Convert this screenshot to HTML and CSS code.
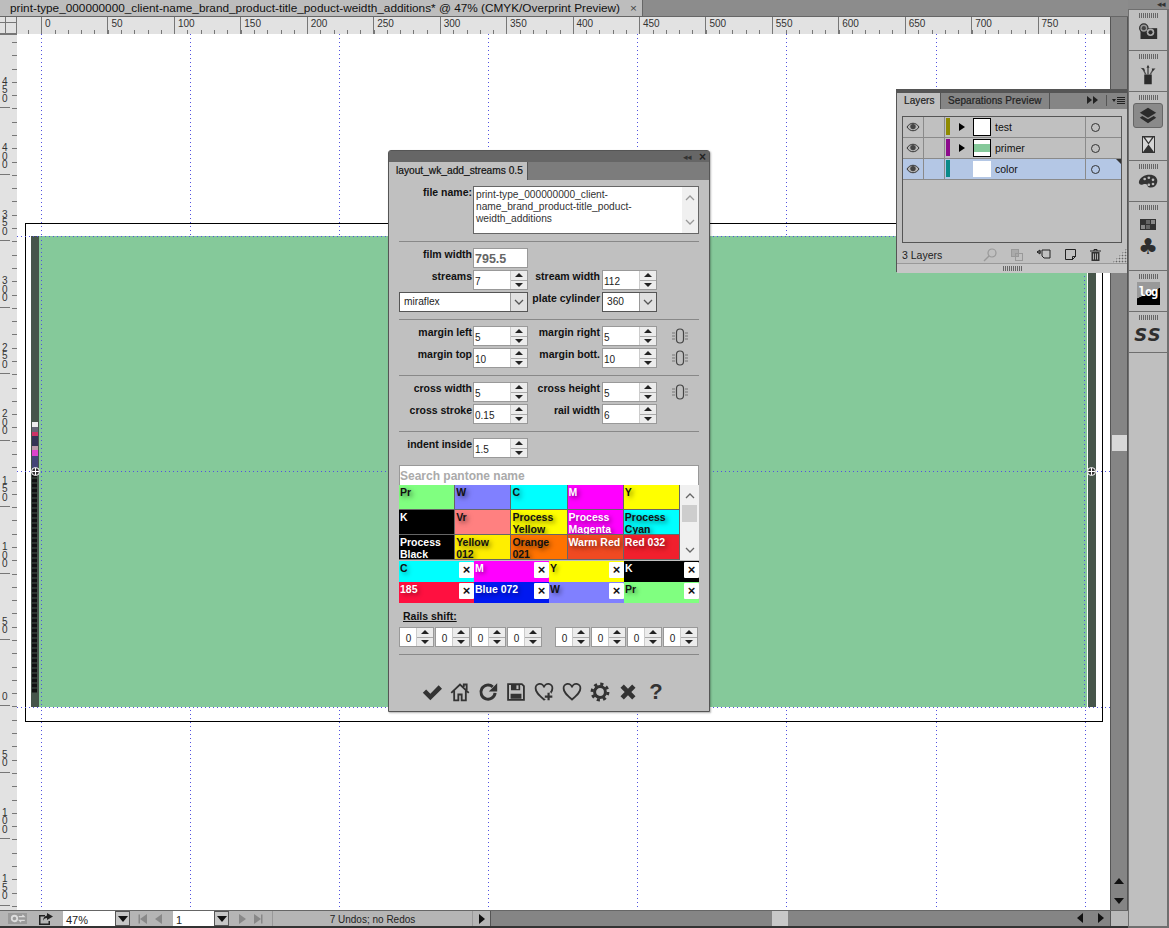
FILE: index.html
```html
<!DOCTYPE html>
<html lang="en">
<head>
    <meta charset="UTF-8">
    <title>print-type_000000000 @ 47%</title>
    <link rel="stylesheet" href="styles.css">
</head>
<body>
<svg class="defs" width="0" height="0">
    <symbol id="chev-down" viewBox="0 0 12 12"><path d="M2 4l4 4 4-4" fill="none" stroke="currentColor" stroke-width="1.3"/></symbol>
    <symbol id="chev-up" viewBox="0 0 12 12"><path d="M2 8l4-4 4 4" fill="none" stroke="currentColor" stroke-width="1.3"/></symbol>
    <symbol id="link" viewBox="0 0 18 18"><rect x="5.5" y="2" width="7" height="14" rx="3.5" fill="none" stroke="#444" stroke-width="1.2"/><path d="M1 6h3M1 9h3M1 12h3M14 6h3M14 9h3M14 12h3" stroke="#777" stroke-width="1.2"/></symbol>
    <symbol id="eye" viewBox="0 0 14 10"><path d="M1 5c3-5 9-5 12 0-3 5-9 5-12 0z" fill="#b5b5b5" stroke="#333"/><circle cx="7" cy="4.6" r="2.7" fill="#444"/></symbol>
    <symbol id="heart" viewBox="0 0 24 24"><path d="M12 21C5 15 2 12 2 8a5 5 0 0 1 10-1.500A5 5 0 0 1 22 8c0 4-3 7-10 13z" fill="none" stroke="#333" stroke-width="2.200"/></symbol>
</svg>

<div class="app">
    <main class="doc">
        <header class="doc-tabs">
            <div class="doc-tab">print-type_000000000_client-name_brand_product-title_poduct-weidth_additions* @ 47% (CMYK/Overprint Preview)<span class="doc-close">×</span></div>
        </header>

        <div class="work">
            <div class="ruler-corner"></div>
            <div class="ruler-h">
                <span>0</span><span>50</span><span>100</span><span>150</span><span>200</span><span>250</span><span>300</span><span>350</span><span>400</span><span>450</span><span>500</span><span>550</span><span>600</span><span>650</span><span>700</span><span>750</span>
            </div>
            <div class="scroll-v">
                <span class="tri tri-up"></span>
                <span class="scroll-v-thumb"></span>
                <span class="tri tri-down"></span>
            </div>
            <div class="ruler-v">
                <span>450</span><span>400</span><span>350</span><span>300</span><span>250</span><span>200</span><span>150</span><span>100</span><span>50</span><span>0</span><span>50</span><span>100</span><span>150</span>
            </div>

            <div class="canvas">
                <div class="guides-v"><i></i><i></i><i></i><i></i><i></i><i></i><i></i><i></i></div>
                <div class="film"></div>
                <div class="print-area"></div>
                <div class="rail rail-left">
                    <div class="rail-marks"></div>
                    <div class="rail-dark"></div>
                </div>
                <div class="rail rail-right"></div>
                <div class="guide-h guide-a"></div>
                <div class="guide-h guide-b"></div>
                <div class="guide-h guide-c"></div>
                <div class="cross cross-left"></div>
                <div class="cross cross-right"></div>
            </div>
        </div>

        <footer class="status">
            <span class="status-gear">
                <svg width="17" height="9" viewBox="0 0 28 14"><circle cx="9" cy="7" r="4.500" fill="none" stroke="#ddd" stroke-width="3"/><path d="M16 4h9l-3-3M26 10h-9l3 3" fill="none" stroke="#ddd" stroke-width="2"/></svg>
            </span>
            <svg class="status-share" width="16" height="14" viewBox="0 0 16 14"><path d="M1 3h6v1.500H2.500v7h8V9H12v4H1z" fill="#222"/><path d="M9 1l6 3.500L9 8V6C7 6 5.500 7 5 9c0-3 1.500-5 4-5.500z" fill="#222"/></svg>
            <span class="field field-zoom">47%</span><span class="field-btn"><b class="tri tri-down"></b></span>
            <span class="nav-group">
                <b class="nav nav-first"></b><b class="nav nav-prev"></b>
            </span>
            <span class="field field-page">1</span><span class="field-btn"><b class="tri tri-down"></b></span>
            <span class="nav-group">
                <b class="nav nav-next"></b><b class="nav nav-last"></b>
            </span>
            <span class="status-msg">7 Undos; no Redos</span>
            <span class="status-play"><b class="tri tri-right"></b></span>
            <div class="scroll-h">
                <span class="scroll-h-thumb"></span>
                <b class="tri tri-left"></b>
                <b class="tri tri-right"></b>
            </div>
            <span class="scroll-corner"></span>
        </footer>
    </main>

    <aside class="dock">
        <div class="dock-top"><span class="collapse">◂◂</span></div>
        <section class="dock-group">
            <div class="grip"></div>
            <svg class="dock-icon" width="20" height="17" viewBox="0 0 24 20"><rect x="3" y="6" width="20" height="13" fill="#2e2e2e"/><circle cx="7" cy="6" r="5" fill="#999" stroke="#2e2e2e" stroke-width="1.500"/><circle cx="7" cy="6" r="2.500" fill="#444"/><circle cx="15" cy="11" r="4.500" fill="#aaa"/><circle cx="15" cy="11" r="2.500" fill="#2e2e2e"/></svg>
        </section>
        <section class="dock-group">
            <div class="grip"></div>
            <svg class="dock-icon" width="18" height="21" viewBox="0 0 24 26"><rect x="7" y="13" width="10" height="13" fill="#2b2b2b"/><path d="M9 13L5 5M12 13V2M15 13l4-7" stroke="#555" stroke-width="2"/><path d="M2 4l5 1 1 4zM12 0l2 4h-4zM22 5l-5 0 1 4z" fill="#333"/></svg>
        </section>
        <section class="dock-group dock-tall">
            <div class="grip"></div>
            <div class="dock-active">
                <svg width="20" height="18" viewBox="0 0 24 22"><path d="M12 1l10 6-10 6L2 7z" fill="#2b2b2b"/><path d="M5 11l7 4 7-4 3 2-10 7L2 13z" fill="#2b2b2b"/></svg>
            </div>
            <svg class="dock-glass" width="13" height="17" viewBox="0 0 13 17"><rect x=".5" y=".5" width="12" height="16" fill="#d5d5d5" stroke="#333"/><path d="M1 16h11L6.500 8.500zM1 1h11L6.500 8.500z" fill="#333"/><path d="M3 1.500h7L6.500 6.500z" fill="#ddd"/></svg>
        </section>
        <section class="dock-group">
            <div class="grip"></div>
            <svg class="dock-icon" width="20" height="15" viewBox="0 0 24 18"><path d="M1 10C2 3 10 0 16 1c5 1 8 5 7 9-1 5-5 7-10 6-2-.5-1-4-4-4-3 0-7 3-8-2z" fill="#333"/><circle cx="8" cy="6" r="1.600" fill="#bbb"/><circle cx="13" cy="4.500" r="1.600" fill="#bbb"/><circle cx="18" cy="7" r="1.600" fill="#bbb"/><circle cx="18" cy="12" r="1.600" fill="#bbb"/><circle cx="13" cy="13" r="1.600" fill="#bbb"/></svg>
        </section>
        <section class="dock-group dock-tall">
            <div class="grip"></div>
            <div class="dock-swatches"><i></i><i class="mid"></i><i class="pale"></i><i class="pale"></i><i class="mid"></i><i></i></div>
            <span class="dock-club">♣</span>
        </section>
        <section class="dock-group">
            <div class="grip"></div>
            <div class="dock-log">log</div>
        </section>
        <section class="dock-group">
            <div class="grip"></div>
            <div class="dock-ss">SS</div>
        </section>
        <div class="dock-rest"></div>
    </aside>
</div>

<!-- floating script panel -->
<div class="panel streams-panel">
    <div class="panel-head"><span class="collapse">◂◂</span><span class="panel-x">×</span></div>
    <div class="panel-tabs"><div class="panel-tab">layout_wk_add_streams 0.5</div></div>
    <div class="streams-body">
        <div class="file-row">
            <label class="lbl lbl-file">file name:</label>
            <div class="file-box">
                <div class="file-text">print-type_000000000_client-name_brand_product-title_poduct-weidth_additions</div>
                <div class="file-scroll">
                    <svg width="12" height="12"><use href="#chev-up"/></svg>
                    <svg width="12" height="12"><use href="#chev-down"/></svg>
                </div>
            </div>
        </div>
        <hr>
        <div class="form-grid form-film">
            <label class="lbl">film width</label><div class="film-input">795.5</div><span></span><span></span>
            <label class="lbl">streams</label><div class="spin"><span class="val">7</span><span class="btns"><b class="up"></b><b class="dn"></b></span></div>
            <label class="lbl">stream width</label><div class="spin"><span class="val">112</span><span class="btns"><b class="up"></b><b class="dn"></b></span></div>
            <div class="select select-wide"><span>miraflex</span><em><svg width="12" height="12"><use href="#chev-down"/></svg></em></div>
            <label class="lbl">plate cylinder</label><div class="select"><span>360</span><em><svg width="12" height="12"><use href="#chev-down"/></svg></em></div>
        </div>
        <hr>
        <div class="form-grid">
            <label class="lbl">margin left</label><div class="spin"><span class="val">5</span><span class="btns"><b class="up"></b><b class="dn"></b></span></div>
            <label class="lbl">margin right</label><div class="spin"><span class="val">5</span><span class="btns"><b class="up"></b><b class="dn"></b></span></div>
            <svg class="link-icon" width="18" height="18"><use href="#link"/></svg>
            <label class="lbl">margin top</label><div class="spin"><span class="val">10</span><span class="btns"><b class="up"></b><b class="dn"></b></span></div>
            <label class="lbl">margin bott.</label><div class="spin"><span class="val">10</span><span class="btns"><b class="up"></b><b class="dn"></b></span></div>
            <svg class="link-icon" width="18" height="18"><use href="#link"/></svg>
        </div>
        <hr>
        <div class="form-grid">
            <label class="lbl">cross width</label><div class="spin"><span class="val">5</span><span class="btns"><b class="up"></b><b class="dn"></b></span></div>
            <label class="lbl">cross height</label><div class="spin"><span class="val">5</span><span class="btns"><b class="up"></b><b class="dn"></b></span></div>
            <svg class="link-icon" width="18" height="18"><use href="#link"/></svg>
            <label class="lbl">cross stroke</label><div class="spin"><span class="val">0.15</span><span class="btns"><b class="up"></b><b class="dn"></b></span></div>
            <label class="lbl">rail width</label><div class="spin"><span class="val">6</span><span class="btns"><b class="up"></b><b class="dn"></b></span></div>
        </div>
        <hr>
        <div class="form-grid">
            <label class="lbl">indent inside</label><div class="spin"><span class="val">1.5</span><span class="btns"><b class="up"></b><b class="dn"></b></span></div>
        </div>

        <div class="search">Search pantone name</div>
        <div class="pantone">
            <div class="swatches">
                <div class="sw pr">Pr</div><div class="sw w">W</div><div class="sw c">C</div><div class="sw m lt">M</div><div class="sw y">Y</div>
                <div class="sw k lt">K</div><div class="sw vr">Vr</div><div class="sw y">Process Yellow</div><div class="sw m lt">Process Magenta</div><div class="sw c">Process Cyan</div>
                <div class="sw k lt">Process Black</div><div class="sw y012">Yellow<br>012</div><div class="sw o021">Orange 021</div><div class="sw warm lt">Warm Red</div><div class="sw r032 lt">Red 032</div>
            </div>
            <div class="list-scroll">
                <svg width="12" height="12"><use href="#chev-up"/></svg>
                <span class="list-thumb"></span>
                <svg class="list-down" width="12" height="12"><use href="#chev-down"/></svg>
            </div>
        </div>
        <div class="picked">
            <div class="pick c">C<span class="rm">×</span></div><div class="pick m lt">M<span class="rm">×</span></div><div class="pick y">Y<span class="rm">×</span></div><div class="pick k lt">K<span class="rm">×</span></div>
            <div class="pick r185 lt">185<span class="rm">×</span></div><div class="pick b072 lt">Blue 072<span class="rm">×</span></div><div class="pick w">W<span class="rm">×</span></div><div class="pick pr">Pr<span class="rm">×</span></div>
        </div>

        <div class="rails-title">Rails shift:</div>
        <div class="rails">
            <div class="rail-set">
                <div class="spin spin-sm"><span class="val">0</span><span class="btns"><b class="up"></b><b class="dn"></b></span></div>
                <div class="spin spin-sm"><span class="val">0</span><span class="btns"><b class="up"></b><b class="dn"></b></span></div>
                <div class="spin spin-sm"><span class="val">0</span><span class="btns"><b class="up"></b><b class="dn"></b></span></div>
                <div class="spin spin-sm"><span class="val">0</span><span class="btns"><b class="up"></b><b class="dn"></b></span></div>
            </div>
            <div class="rail-set">
                <div class="spin spin-sm"><span class="val">0</span><span class="btns"><b class="up"></b><b class="dn"></b></span></div>
                <div class="spin spin-sm"><span class="val">0</span><span class="btns"><b class="up"></b><b class="dn"></b></span></div>
                <div class="spin spin-sm"><span class="val">0</span><span class="btns"><b class="up"></b><b class="dn"></b></span></div>
                <div class="spin spin-sm"><span class="val">0</span><span class="btns"><b class="up"></b><b class="dn"></b></span></div>
            </div>
        </div>
        <hr class="hr-rails">

        <div class="tools">
            <svg width="20" height="20" viewBox="0 0 24 24"><path d="M1 13l4-4 5 5L20 4l4 4-14 14z" fill="#333"/></svg>
            <svg width="20" height="20" viewBox="0 0 24 24"><path d="M1.500 13L12 3l10.500 10M5 10.500V22h5v-7h4v7h5V10.500M16.500 6V3H20v6.500" fill="none" stroke="#333" stroke-width="2.200"/></svg>
            <svg width="20" height="20" viewBox="0 0 24 24"><path d="M20.500 13a8.500 8.500 0 1 1-2.800-7.200" fill="none" stroke="#333" stroke-width="3.600"/><path d="M23 1.500v10h-10z" fill="#333"/></svg>
            <svg width="20" height="20" viewBox="0 0 24 24"><path d="M2.500 2.500H19L21.500 5v16.500h-19z" fill="none" stroke="#333" stroke-width="2.200"/><path d="M6 2.500h11V10H6zM5.500 20v-6h13v6z" fill="#333"/><path d="M12.500 4h2.500v4.500h-2.500z" fill="#c0c0c0"/></svg>
            <svg width="20" height="20" viewBox="0 0 24 24"><use href="#heart" width="24" height="24"/><path d="M17.500 12.500v10M12.500 17.500h10" stroke="#c0c0c0" stroke-width="6"/><path d="M17.500 13v9M13 17.500h9" stroke="#333" stroke-width="2.600"/></svg>
            <svg width="20" height="20" viewBox="0 0 24 24"><use href="#heart" width="24" height="24"/></svg>
            <svg width="20" height="20" viewBox="0 0 24 24"><circle cx="12" cy="12" r="6.500" fill="none" stroke="#333" stroke-width="3.600"/><circle cx="12" cy="12" r="9.500" fill="none" stroke="#333" stroke-width="3.600" stroke-dasharray="3.730 3.730"/></svg>
            <svg width="20" height="20" viewBox="0 0 24 24"><path d="M3 7l4-4 5 5 5-5 4 4-5 5 5 5-4 4-5-5-5 5-4-4 5-5z" fill="#333"/></svg>
            <span class="tool-help">?</span>
        </div>
    </div>
</div>

<!-- layers panel -->
<div class="panel layers-panel">
    <div class="layers-tabs">
        <div class="layers-tab on">Layers</div>
        <div class="layers-tab">Separations Preview</div>
        <span class="layers-ff"><b></b><b></b></span>
        <span class="layers-menu"><b class="mini-tri"></b><i></i></span>
    </div>
    <div class="layers-body">
        <div class="layers-list">
            <div class="layer">
                <span class="cell-eye"><svg width="14" height="10"><use href="#eye"/></svg></span>
                <span class="cell-lock"></span>
                <span class="cell-color"><i class="olive"></i></span>
                <span class="cell-exp"><b class="exp"></b></span>
                <span class="thumb"></span>
                <span class="layer-name">test</span>
                <span class="cell-target"><i></i></span>
            </div>
            <div class="layer">
                <span class="cell-eye"><svg width="14" height="10"><use href="#eye"/></svg></span>
                <span class="cell-lock"></span>
                <span class="cell-color"><i class="purple"></i></span>
                <span class="cell-exp"><b class="exp"></b></span>
                <span class="thumb thumb-green"></span>
                <span class="layer-name">primer</span>
                <span class="cell-target"><i></i></span>
            </div>
            <div class="layer layer-sel">
                <span class="cell-eye"><svg width="14" height="10"><use href="#eye"/></svg></span>
                <span class="cell-lock"></span>
                <span class="cell-color"><i class="teal"></i></span>
                <span class="cell-exp"></span>
                <span class="thumb thumb-plain"></span>
                <span class="layer-name">color</span>
                <span class="cell-target"><i></i></span>
            </div>
        </div>
        <div class="layers-foot">
            <span class="layers-count">3 Layers</span>
            <svg class="foot-ico" width="14" height="14" viewBox="0 0 14 14"><circle cx="9" cy="5" r="4" fill="none" stroke="#999" stroke-width="1.200"/><path d="M6 8l-5 5" stroke="#999" stroke-width="1.500"/></svg>
            <svg class="foot-ico" width="12" height="12" viewBox="0 0 12 12"><rect x="0.500" y="0.500" width="7" height="7" fill="#aaa" stroke="#999"/><rect x="4.500" y="4.500" width="7" height="7" fill="none" stroke="#999"/></svg>
            <svg class="foot-ico" width="14" height="12" viewBox="0 0 14 12"><path d="M5 1h8v8H7L5 7zM0 3l3-2v4zM0 3h4" fill="none" stroke="#222"/></svg>
            <svg class="foot-ico" width="11" height="12" viewBox="0 0 11 12"><path d="M.5.500h10v7l-3 3h-7zM7.500 11V7.500H11" fill="none" stroke="#222"/></svg>
            <svg class="foot-ico" width="11" height="12" viewBox="0 0 11 12"><path d="M0 2h11M4 2V.500h3V2" fill="none" stroke="#222"/><path d="M1.500 3h8v9h-8z" fill="#333"/><path d="M3.500 4.500v6M5.500 4.500v6M7.500 4.500v6" stroke="#ccc" stroke-width=".8"/></svg>
            <span class="layers-resize"></span>
        </div>
    </div>
    <div class="layers-grip"><div class="grip"></div></div>
</div>
</body>
</html>
```

FILE: styles.css
```css
html, body {
    margin: 0;
    height: 100%;
    overflow: hidden;
}
body {
    position: relative;
    width: 1169px;
    height: 928px;
    font-family: "Liberation Sans", Arial, sans-serif;
    color: #111;
    background-color: #333;
}
.defs {
    position: absolute;
}
.app {
    display: flex;
    height: 928px;
}

/* document area */
.doc {
    flex: 0 0 1128px;
    display: flex;
    flex-direction: column;
}
.doc-tabs {
    height: 17px;
    background-color: #8c8c8c;
    box-sizing: border-box;
    border-bottom: 1px solid #666;
}
.doc-tab {
    position: relative;
    width: 643px;
    height: 16px;
    box-sizing: border-box;
    padding-left: 10px;
    background-color: #bdbdbd;
    border-right: 1px solid #666;
    font-size: 11.8px;
    line-height: 16px;
    white-space: nowrap;
}
.doc-close {
    position: absolute;
    right: 5px;
    top: 0;
    color: #444;
}
.work {
    flex: 1;
    display: grid;
    grid-template-columns: 17px 1093px 18px;
    grid-template-rows: 17px 876px;
}
.ruler-corner {
    box-sizing: border-box;
    border-right: 1px solid #777;
    border-bottom: 1px solid #777;
    background: linear-gradient(#777, #777) 5px 0 / 1px 100% no-repeat, linear-gradient(#777, #777) 0 5px / 100% 1px no-repeat, #e2e2e2;
}
.ruler-h {
    display: flex;
    padding-left: 24px;
    overflow: hidden;
    background-color: #e2e2e2;
    background-image: repeating-linear-gradient(90deg, #777 0 1px, transparent 1px 13.29px);
    background-size: 100% 4px;
    background-position: 10.7px bottom;
    background-repeat: no-repeat;
}
.ruler-h span {
    flex: 0 0 66.45px;
    box-sizing: border-box;
    border-left: 1px solid #777;
    padding-left: 3px;
    font-size: 10px;
    line-height: 14px;
    color: #333;
}
.ruler-h span:last-child {
    flex-basis: 100px;
}
.ruler-v {
    display: flex;
    flex-direction: column;
    padding-top: 7px;
    overflow: hidden;
    background-color: #e2e2e2;
    background-image: repeating-linear-gradient(180deg, #777 0 1px, transparent 1px 13.29px);
    background-size: 5px 100%;
    background-position: right 7px;
    background-repeat: no-repeat;
    box-sizing: border-box;
    border-top: 1px solid #777;
}
.ruler-v span {
    flex: 0 0 66.45px;
    box-sizing: border-box;
    display: flex;
    align-items: flex-end;
    width: 10px;
    border-bottom: 1px solid #777;
    padding: 0 0 4px 2px;
    font-size: 10px;
    line-height: 8.5px;
    color: #333;
    word-break: break-all;
}

/* artboard, the pieces sit on a free canvas */
.canvas {
    position: relative;
    overflow: hidden;
    background-color: #fff;
}
.guides-v {
    position: absolute;
    inset: 0 0 0 24px;
    display: flex;
}
.guides-v i {
    flex: 0 0 149.1px;
    background: repeating-linear-gradient(180deg, #5252e0 0 1px, transparent 1px 4px) left top / 1px 100% no-repeat;
}
.film {
    position: absolute;
    left: 8px;
    top: 189px;
    width: 1076px;
    height: 497px;
    border: 1px solid #000;
}
.print-area {
    position: absolute;
    left: 22px;
    top: 202px;
    width: 1048px;
    height: 471px;
    background-color: #85c99a;
}
.print-area::before,
.print-area::after {
    content: "";
    position: absolute;
    top: 0;
    bottom: 0;
    width: 1px;
    background: repeating-linear-gradient(180deg, #5252e0 0 1px, transparent 1px 4px);
}
.print-area::before {
    left: 2px;
}
.print-area::after {
    right: 2px;
}
.rail {
    position: absolute;
    top: 202px;
    width: 8px;
    height: 471px;
    background-color: #46554a;
}
.rail-left {
    left: 14px;
}
.rail-right {
    left: 1071px;
}
.rail-marks {
    position: absolute;
    left: 1px;
    top: 186px;
    width: 6px;
    height: 48px;
    background: linear-gradient(180deg, #eee 0 5px, #667 5px 10px, #c36 10px 14px, #335 14px 24px, #b9a 24px 28px, #d4c 28px 34px, #447 34px 48px);
}
.rail-dark {
    position: absolute;
    left: 1px;
    top: 238px;
    width: 5px;
    bottom: 14px;
    background: repeating-linear-gradient(180deg, #111 0 3px, #2c342e 3px 5px);
}
.guide-h {
    position: absolute;
    left: 0;
    right: 0;
    height: 1px;
    background: repeating-linear-gradient(90deg, #5252e0 0 1px, transparent 1px 4px);
}
.guide-a {
    top: 202px;
}
.guide-b {
    top: 437px;
}
.guide-c {
    top: 673px;
}
.cross {
    position: absolute;
    top: 433px;
    width: 7px;
    height: 7px;
    border-radius: 50%;
    border: 1px solid #fff;
    background: linear-gradient(#fff, #fff) center / 100% 1px no-repeat, linear-gradient(#fff, #fff) center / 1px 100% no-repeat, #333;
}
.cross-left {
    left: 14px;
}
.cross-right {
    left: 1070px;
}

/* scrollbars and triangles */
.scroll-v {
    position: relative;
    grid-column: 3;
    grid-row: 1 / 3;
    background-color: #858585;
    border-left: 1px solid #555;
    border-right: 1px solid #555;
    box-sizing: border-box;
}
.scroll-v-thumb {
    position: absolute;
    left: 1px;
    right: 0;
    top: 418px;
    height: 16px;
    background-color: #d8d8d8;
}
.scroll-v .tri-up {
    position: absolute;
    left: 3px;
    bottom: 26px;
}
.scroll-v .tri-down {
    position: absolute;
    left: 3px;
    bottom: 6px;
}
.tri {
    display: block;
    width: 0;
    height: 0;
    border-style: solid;
    border-color: transparent;
}
.tri-up {
    border-width: 0 5px 6px;
    border-bottom-color: #111;
}
.tri-down {
    border-width: 6px 5px 0;
    border-top-color: #111;
}
.tri-left {
    border-width: 5px 6px 5px 0;
    border-right-color: #111;
}
.tri-right {
    border-width: 5px 0 5px 6px;
    border-left-color: #111;
}

/* status bar */
.status {
    height: 18px;
    display: flex;
    align-items: stretch;
    box-sizing: border-box;
    background-color: #b5b5b5;
    border-top: 1px solid #666;
    border-bottom: 2px solid #333;
}
.status-gear {
    flex: 0 0 19px;
    height: 11px;
    margin-left: 8px;
    align-self: center;
    display: flex;
    align-items: center;
    justify-content: center;
    background-color: #9a9a9a;
}
.status-share {
    margin: 0 9px 0 11px;
    align-self: center;
}
.field {
    background-color: #fff;
    font-size: 11px;
    line-height: 18px;
    padding-left: 3px;
    box-sizing: border-box;
    color: #222;
    overflow: hidden;
}
.field-zoom {
    flex: 0 0 52px;
}
.field-page {
    flex: 0 0 41px;
}
.field-btn {
    flex: 0 0 15px;
    display: flex;
    align-items: center;
    justify-content: center;
    background-color: #c6c6c6;
    border: 1px solid #555;
    box-sizing: border-box;
}
.nav-group {
    display: flex;
    align-items: center;
    gap: 8px;
    flex: 0 0 43px;
    padding-left: 10px;
    box-sizing: border-box;
}
.nav {
    width: 0;
    height: 0;
    border-style: solid;
    border-color: transparent;
}
.nav-first, .nav-prev {
    border-width: 5px 7px 5px 0;
    border-right-color: #888;
}
.nav-next, .nav-last {
    border-width: 5px 0 5px 7px;
    border-left-color: #888;
}
.nav-first {
    box-shadow: -2px 0 0 -0.5px #888;
}
.nav-last {
    box-shadow: 2px 0 0 -0.5px #888;
}
.status-msg {
    flex: 0 0 200px;
    text-align: center;
    font-size: 10px;
    line-height: 18px;
    color: #222;
    border-left: 1px solid #999;
    box-sizing: border-box;
    overflow: hidden;
}
.status-play {
    flex: 0 0 18px;
    display: flex;
    align-items: center;
    justify-content: center;
    border-left: 1px solid #999;
    box-sizing: border-box;
}
.scroll-h {
    position: relative;
    flex: 1;
    background-color: #858585;
    border-left: 1px solid #555;
}
.scroll-h-thumb {
    position: absolute;
    left: 281px;
    top: 0;
    bottom: 0;
    width: 16px;
    background-color: #c8c8c8;
}
.scroll-h .tri-left {
    position: absolute;
    right: 27px;
    top: 2px;
}
.scroll-h .tri-right {
    position: absolute;
    right: 6px;
    top: 2px;
}
.scroll-corner {
    flex: 0 0 18px;
    background-color: #b9b9b9;
    border-left: 1px solid #555;
    box-sizing: border-box;
}

/* right dock */
.dock {
    flex: 0 0 41px;
    display: flex;
    flex-direction: column;
    box-sizing: border-box;
    padding: 0 2px 2px 1px;
    background-color: #6f6f6f;
}
.dock-top {
    height: 9px;
    margin: 0 -2px 0 -1px;
    background-color: #8a8a8a;
    text-align: right;
}
.collapse {
    font-size: 9px;
    line-height: 8px;
    letter-spacing: -1px;
    color: #333;
}
.dock-top .collapse {
    display: block;
    padding-right: 4px;
}
.dock-group {
    display: flex;
    flex-direction: column;
    align-items: center;
    height: 40px;
    margin-top: 1px;
    background-color: #bfbfbf;
    box-sizing: border-box;
    padding-top: 3px;
}
.dock-tall {
    height: 68px;
}
.grip {
    width: 19px;
    height: 5px;
    flex: none;
    background: repeating-linear-gradient(90deg, #666 0 1px, transparent 1px 2px);
}
.dock-icon {
    margin-top: 5px;
}
.dock-active {
    width: 28px;
    height: 23px;
    margin-top: 3px;
    display: flex;
    flex: none;
    align-items: center;
    justify-content: center;
    background-color: #8a8a8a;
    border: 1px solid #666;
    border-radius: 3px;
}
.dock-glass {
    margin-top: 8px;
}
.dock-swatches {
    display: grid;
    grid-template-columns: repeat(3, 4px);
    grid-auto-rows: 4px;
    gap: 1px;
    padding: 1px;
    margin-top: 9px;
    background-color: #333;
}
.dock-swatches i {
    background-color: #333;
}
.dock-swatches .mid {
    background-color: #666;
}
.dock-swatches .pale {
    background-color: #888;
}
.dock-club {
    margin-top: 5px;
    font-family: "DejaVu Sans", sans-serif;
    font-size: 22px;
    line-height: 24px;
    color: #2e2e2e;
}
.dock-log {
    width: 23px;
    height: 23px;
    margin-top: 3px;
    box-sizing: border-box;
    background: linear-gradient(155deg, #999 0 48%, #000 50%);
    font-family: "DejaVu Sans Mono", monospace;
    font-weight: bold;
    font-size: 12px;
    line-height: 20px;
    color: #fff;
    text-align: center;
    letter-spacing: -1px;
}
.dock-ss {
    margin-top: 4px;
    font-family: "DejaVu Sans", sans-serif;
    font-size: 18px;
    font-weight: bold;
    font-style: italic;
    line-height: 22px;
    letter-spacing: 1px;
    color: #2e2e2e;
}
.dock-rest {
    flex: 1;
    margin-top: 1px;
    background-color: #bfbfbf;
}

/* floating panels */
.panel {
    position: absolute;
    box-sizing: border-box;
    background-color: #c0c0c0;
}
.streams-panel {
    left: 388px;
    top: 150px;
    width: 322px;
    height: 562px;
    border: 1px solid #555;
    border-top-left-radius: 3px;
    border-top-right-radius: 3px;
    box-shadow: 1px 1px 2px rgba(0, 0, 0, 0.3);
}
.panel-head {
    height: 11px;
    background-color: #666;
    display: flex;
    justify-content: flex-end;
    align-items: center;
    gap: 8px;
    padding-right: 3px;
}
.panel-x {
    font-size: 12px;
    line-height: 10px;
    font-weight: bold;
    color: #222;
}
.panel-tabs {
    height: 18px;
    background-color: #7c7c7c;
}
.panel-tab {
    width: 139px;
    height: 18px;
    box-sizing: border-box;
    padding-left: 7px;
    background-color: #c0c0c0;
    border-right: 1px solid #555;
    font-size: 10.2px;
    line-height: 17px;
    white-space: nowrap;
    -webkit-text-stroke: 0.2px;
}
.streams-body {
    padding: 6px 10px 0;
}
.lbl {
    display: block;
    text-align: right;
    font-size: 10.5px;
    font-weight: bold;
    line-height: 13px;
    color: #111;
    white-space: nowrap;
}
.file-row {
    display: grid;
    grid-template-columns: 73px 226px;
    gap: 1px;
    height: 48px;
}
.file-box {
    display: flex;
    background-color: #fff;
    border: 1px solid #666;
    box-sizing: border-box;
}
.file-text {
    flex: 1;
    padding: 2px;
    font-size: 10.2px;
    line-height: 12px;
    color: #333;
    overflow-wrap: anywhere;
}
.file-scroll {
    flex: 0 0 16px;
    display: flex;
    flex-direction: column;
    justify-content: space-between;
    align-items: center;
    padding: 5px 0;
    box-sizing: border-box;
    background-color: #f0f0f0;
    color: #999;
}
hr {
    height: 1px;
    margin: 7px 0 6px;
    border: 0;
    background-color: #888;
}
.form-grid {
    display: grid;
    grid-template-columns: 73px 55px 72px 55px 16px;
    column-gap: 1px;
    row-gap: 2px;
    grid-auto-rows: 20px;
    align-items: start;
}
.form-film {
    grid-template-columns: 73px 55px 72px 55px;
}
.spin + .lbl,
.select + .lbl {
    padding-right: 1px;
}
.film-input {
    box-sizing: border-box;
    height: 20px;
    border: 1px solid #999;
    background-color: #fff;
    padding-left: 1px;
    font-size: 12.5px;
    font-weight: bold;
    line-height: 20px;
    color: #666;
}
.spin {
    display: flex;
    box-sizing: border-box;
    height: 20px;
    border: 1px solid #999;
    background-color: #fff;
}
.spin .val {
    flex: 1;
    font-size: 10px;
    line-height: 21px;
    color: #222;
    padding-left: 1px;
    min-width: 0;
}
.btns {
    flex: 0 0 16px;
    display: flex;
    flex-direction: column;
    gap: 1px;
    background-color: #aaa;
    border-left: 1px solid #ccc;
}
.btns b {
    flex: 1;
    position: relative;
    background-color: #ececec;
}
.btns b::before {
    content: "";
    position: absolute;
    left: 50%;
    top: 50%;
    margin: -2px 0 0 -4px;
    border-style: solid;
    border-color: transparent;
}
.btns .up::before {
    border-width: 0 4px 4px;
    border-bottom-color: #222;
}
.btns .dn::before {
    border-width: 4px 4px 0;
    border-top-color: #222;
}
.select {
    display: flex;
    box-sizing: border-box;
    height: 20px;
    border: 1px solid #555;
    background-color: #fff;
    font-size: 10.2px;
    line-height: 18px;
    color: #222;
}
.select span {
    flex: 1;
    padding-left: 4px;
}
.select em {
    flex: 0 0 16px;
    display: flex;
    align-items: center;
    justify-content: center;
    background-color: #e0e0e0;
    border-left: 1px solid #999;
    color: #555;
}
.select-wide {
    grid-column: span 2;
    width: 129px;
}
.link-icon {
    margin: 1px 0 0 13px;
}
.search {
    box-sizing: border-box;
    height: 20px;
    margin-top: 7px;
    border: 1px solid #999;
    border-bottom: 0;
    background-color: #fff;
    font-size: 12px;
    font-weight: bold;
    line-height: 20px;
    color: #aaa;
}
.pantone {
    display: flex;
    height: 75px;
    background-color: #666;
}
.swatches {
    flex: 0 0 281px;
    display: grid;
    grid-template-columns: repeat(5, 1fr);
    grid-auto-rows: 25px;
}
.sw, .pick {
    position: relative;
    box-sizing: border-box;
    font-size: 10.5px;
    font-weight: bold;
    line-height: 12px;
    padding: 1px;
    color: #111;
    text-shadow: 2px 2px 5px rgba(0, 0, 0, 0.55);
    overflow: hidden;
}
.sw {
    border-right: 1px solid #666;
    border-bottom: 1px solid #666;
}
.lt {
    color: #fff;
}
.pr { background-color: #80ff80; }
.w { background-color: #8080ff; }
.c { background-color: #00ffff; }
.m { background-color: #ff00ff; }
.y { background-color: #ffff00; }
.k { background-color: #000; }
.vr { background-color: #ff8080; }
.y012 { background-color: #ffee00; }
.o021 { background-color: #ff7300; }
.warm { background-color: #f04a22; }
.r032 { background-color: #f1202d; }
.r185 { background-color: #ff1040; }
.b072 { background-color: #0018f0; }
.list-scroll {
    flex: 1;
    display: flex;
    flex-direction: column;
    align-items: center;
    background-color: #f0f0f0;
    padding-top: 5px;
    color: #666;
}
.list-thumb {
    width: 15px;
    height: 17px;
    margin-top: 3px;
    background-color: #cdcdcd;
}
.list-down {
    margin-top: auto;
    margin-bottom: 4px;
}
.picked {
    display: grid;
    grid-template-columns: repeat(4, 1fr);
    grid-auto-rows: 21px;
    margin-top: 1px;
}
.pick {
    text-shadow: 2px 2px 4px rgba(0, 0, 0, 0.4);
}
.pick .rm {
    position: absolute;
    right: 0;
    top: 1px;
    width: 15px;
    height: 16px;
    background-color: #fff;
    border-radius: 1px;
    font-size: 13px;
    line-height: 15px;
    text-align: center;
    color: #111;
    text-shadow: none;
}
.rails-title {
    margin: 7px 0 0 4px;
    height: 14px;
    font-size: 10.5px;
    font-weight: bold;
    line-height: 13px;
    text-decoration: underline;
    color: #111;
}
.rails {
    display: flex;
    justify-content: space-between;
    margin-top: 3px;
    padding-right: 1px;
}
.rail-set {
    display: flex;
    gap: 1px;
}
.spin-sm {
    width: 35px;
}
.spin-sm .val {
    text-align: center;
}
.hr-rails {
    margin: 7px 0 0;
}
.tools {
    display: flex;
    gap: 8px;
    margin: 27px 0 0 23px;
    align-items: center;
    height: 20px;
}
.tool-help {
    width: 20px;
    text-align: center;
    font-size: 22px;
    font-weight: bold;
    line-height: 20px;
    color: #333;
}

/* layers */
.layers-panel {
    left: 896px;
    top: 89px;
    width: 232px;
    height: 183px;
    border: 1px solid #555;
    border-top-width: 4px;
}
.layers-tabs {
    position: relative;
    display: flex;
    height: 16px;
    background-color: #858585;
}
.layers-tab {
    box-sizing: border-box;
    padding: 0 7px;
    height: 16px;
    font-size: 10px;
    line-height: 16px;
    color: #222;
    letter-spacing: 0.1px;
    border-right: 1px solid #555;
    -webkit-text-stroke: 0.2px;
}
.layers-tab.on {
    width: 44px;
    background-color: #c0c0c0;
}
.layers-ff {
    position: absolute;
    left: 190px;
    top: 3px;
    display: flex;
    gap: 1px;
}
.layers-ff b {
    width: 0;
    height: 0;
    border-style: solid;
    border-color: transparent transparent transparent #222;
    border-width: 4px 0 4px 5px;
}
.layers-menu {
    position: absolute;
    right: 2px;
    top: 2px;
    display: flex;
    align-items: center;
    gap: 1px;
    border-left: 1px solid #555;
    padding-left: 5px;
    height: 11px;
}
.layers-menu i {
    display: block;
    width: 8px;
    height: 7px;
    background: repeating-linear-gradient(180deg, #222 0 1px, transparent 1px 2px);
}
.mini-tri {
    width: 0;
    height: 0;
    border-style: solid;
    border-color: #222 transparent transparent;
    border-width: 3px 2.500px 0;
}
.layers-body {
    padding: 7px 5px 0;
}
.layers-list {
    box-sizing: border-box;
    height: 127px;
    border: 1px solid #555;
}
.layer {
    display: flex;
    align-items: center;
    height: 21px;
    box-sizing: border-box;
    border-bottom: 1px solid #8a8a8a;
    font-size: 10.500px;
}
.layer-sel {
    background-color: #b4c7e5;
    position: relative;
}
.layer-sel::after {
    content: "";
    position: absolute;
    right: 0;
    top: 0;
    border-style: solid;
    border-width: 0 5px 5px 0;
    border-color: transparent #333 transparent transparent;
}
.cell-eye {
    flex: 0 0 21px;
    height: 100%;
    box-sizing: border-box;
    border-right: 1px solid #8a8a8a;
    display: flex;
    align-items: center;
    justify-content: center;
}
.cell-lock {
    flex: 0 0 21px;
    height: 100%;
    box-sizing: border-box;
    border-right: 1px solid #8a8a8a;
}
.cell-color {
    flex: 0 0 5px;
    height: 100%;
    box-sizing: border-box;
    padding: 1px 0 2px;
    margin-left: 1px;
}
.cell-color i {
    display: block;
    width: 4px;
    height: 100%;
}
.olive { background-color: #8f8a00; }
.purple { background-color: #8c0a8c; }
.teal { background-color: #0a8a8a; }
.cell-exp {
    flex: 0 0 22px;
    display: flex;
    justify-content: center;
}
.exp {
    width: 0;
    height: 0;
    border-style: solid;
    border-color: transparent transparent transparent #000;
    border-width: 4px 0 4px 6px;
}
.thumb {
    box-sizing: border-box;
    width: 18px;
    height: 18px;
    background-color: #fff;
    border: 1px solid #000;
}
.thumb-green {
    background: linear-gradient(#fff 0 4px, #85c99a 4px 12px, #fff 12px);
}
.thumb-plain {
    border: 0;
    height: 16px;
}
.layer-name {
    flex: 1;
    margin-left: 4px;
    color: #111;
}
.cell-target {
    flex: 0 0 36px;
    height: 100%;
    box-sizing: border-box;
    border-left: 1px solid #8a8a8a;
    display: flex;
    align-items: center;
    padding-left: 5px;
}
.cell-target i {
    width: 7px;
    height: 7px;
    border: 1px solid #333;
    border-radius: 50%;
}
.layers-foot {
    position: relative;
    display: flex;
    align-items: center;
    height: 20px;
    box-sizing: border-box;
    padding-top: 4px;
    font-size: 10.500px;
    color: #222;
}
.layers-count {
    flex: 0 0 81px;
}
.foot-ico {
    margin-right: 14px;
}
.layers-resize {
    position: absolute;
    right: -5px;
    bottom: 0;
    width: 15px;
    height: 15px;
    background: radial-gradient(#666 40%, transparent 50%) 0 0 / 3px 3px, #c8c8c8;
    clip-path: polygon(100% 0, 100% 100%, 0 100%);
}
.layers-grip {
    display: flex;
    justify-content: center;
    align-items: center;
    height: 9px;
    background-color: #c6c6c6;
    border-top: 1px solid #999;
}
```
